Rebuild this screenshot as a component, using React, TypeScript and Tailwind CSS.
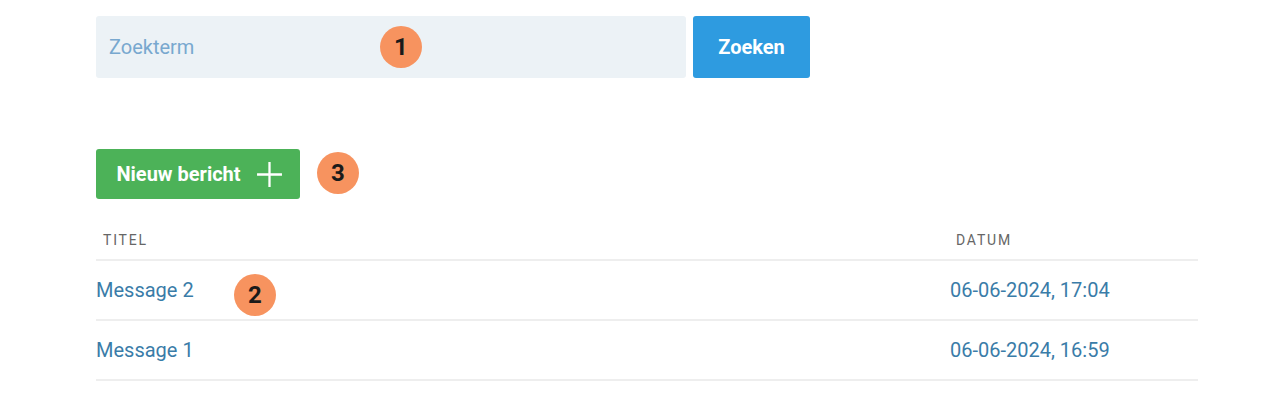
import React from 'react';

interface Message {
  id: number;
  title: string;
  date: string;
}

const messages: Message[] = [
  { id: 2, title: 'Message 2', date: '06-06-2024, 17:04' },
  { id: 1, title: 'Message 1', date: '06-06-2024, 16:59' },
];

function Marker({ n, className }: { n: number; className: string }) {
  return (
    <span
      className={`absolute flex items-center justify-center w-[42px] h-[42px] rounded-full bg-[#f7935f] text-[#1a1a1a] text-[24px] font-bold ${className}`}
    >
      {n}
    </span>
  );
}

export default function App() {
  return (
    <div className="w-[1280px] h-[400px] bg-white font-['Roboto','Liberation_Sans',sans-serif]">
      <div className="pl-[96px] pt-[16px] w-[1198px]">
        {/* Search */}
        <div className="flex gap-[7px]">
          <div className="relative w-[590px] h-[62px] rounded-[3px] bg-[#ecf2f6] flex items-center pl-[13px]">
            <input
              placeholder="Zoekterm"
              className="w-full bg-transparent outline-none text-[20px] text-[#333] placeholder:text-[#78a8cf]"
            />
            <Marker n={1} className="left-[284px] top-[10px]" />
          </div>
          <button className="w-[117px] h-[62px] rounded-[3px] bg-[#2e9be0] text-white text-[20px] font-bold">
            Zoeken
          </button>
        </div>

        {/* New message */}
        <div className="relative mt-[71px] flex">
          <button className="h-[50px] w-[204px] rounded-[3px] bg-[#4cb258] text-white text-[20px] font-bold flex items-center justify-center gap-[15px] pl-[3px]">
            Nieuw bericht
            <svg width="27" height="27" viewBox="0 0 26 26" fill="none" stroke="white" strokeWidth="2.2">
              <path d="M13 1v24M1 13h24" />
            </svg>
          </button>
          <Marker n={3} className="left-[221px] top-[3px]" />
        </div>

        {/* Table */}
        <table className="mt-[26px] w-full border-collapse">
          <thead>
            <tr className="border-b-2 border-[#eeeeee]">
              <th className="text-left font-normal text-[14px] tracking-[1.8px] text-[#666] pl-[7px] pt-[5px] pb-[8px]">
                TITEL
              </th>
              <th className="text-left font-normal text-[14px] tracking-[1.8px] text-[#666] pl-[6px] pt-[5px] pb-[8px] w-[248px]">
                DATUM
              </th>
            </tr>
          </thead>
          <tbody>
            {messages.map((m, i) => (
              <tr key={m.id} className="border-b-2 border-[#eeeeee] h-[60px]">
                <td className="relative text-[20px] text-[#3a7ca8]">
                  {m.title}
                  {i === 0 && <Marker n={2} className="left-[138px] top-[13px]" />}
                </td>
                <td className="text-[20px] text-[#3a7ca8]">{m.date}</td>
              </tr>
            ))}
          </tbody>
        </table>
      </div>
    </div>
  );
}
